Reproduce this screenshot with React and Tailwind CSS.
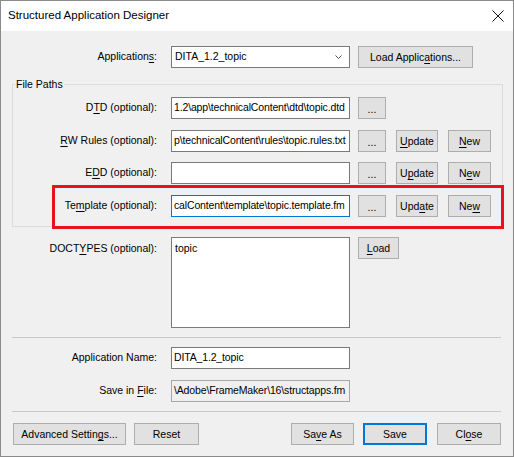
import { useState } from "react";

// underline one mnemonic letter, Windows style
function Mn({ text, at }) {
  if (at == null || at < 0) return <>{text}</>;
  return (
    <>
      {text.slice(0, at)}
      <span className="underline underline-offset-[2px]">{text[at]}</span>
      {text.slice(at + 1)}
    </>
  );
}

function Btn({ children, className = "", primary = false }) {
  return (
    <button
      className={`h-[22px] shrink-0 flex items-center justify-center bg-[#e1e1e1] border text-black text-[10.5px] leading-none ${
        primary ? "border-[#0078d7] shadow-[inset_0_0_0_1px_#0078d7]" : "border-[#adadad]"
      } ${className}`}
    >
      {children}
    </button>
  );
}

function Dots() {
  return <Btn className="w-[28px] text-[#6d6d6d] pt-[3px]">...</Btn>;
}

function Field({ value = "", focused = false, readOnly = false }) {
  return (
    <div
      className={`w-[179px] h-[22px] shrink-0 flex items-center px-[2px] overflow-hidden whitespace-nowrap tracking-[-0.15px] border ${
        focused ? "border-[#0078d7]" : readOnly ? "border-[#a8a8a8]" : "border-[#7a7a7a]"
      } ${readOnly ? "bg-[#f0f0f0]" : "bg-white"}`}
    >
      {value}
    </div>
  );
}

function PathRow({ label, at, value, focused, upd, nw, buttons = true, className = "" }) {
  return (
    <div className={`flex items-center h-[22px] ${className}`}>
      <div className="w-[144px] text-right whitespace-nowrap">
        <Mn text={label} at={at} />
      </div>
      <div className="ml-[14px]">
        <Field value={value} focused={focused} />
      </div>
      <div className="ml-[8px]">
        <Dots />
      </div>
      {buttons && (
        <>
          <Btn className="ml-[10px] w-[42px]">
            <Mn text="Update" at={upd} />
          </Btn>
          <Btn className="ml-[10px] w-[43px]">
            <Mn text="New" at={nw} />
          </Btn>
        </>
      )}
    </div>
  );
}

export default function App() {
  const [app] = useState("DITA_1.2_topic");

  return (
    <div className="relative w-[514px] h-[457px] border border-[#8a8a8a] bg-[#f0f0f0] flex flex-col text-black text-[10.5px] font-['Liberation_Sans',Arial,sans-serif]">
      {/* title bar */}
      <div className="h-[30px] bg-white flex items-center justify-between pl-[7px] pr-[9px]">
        <span className="text-[11.5px]">Structured Application Designer</span>
        <svg width="12" height="12" viewBox="0 0 12 12" className="text-[#111]">
          <path d="M0.5 0.5 L11.5 11.5 M11.5 0.5 L0.5 11.5" stroke="currentColor" strokeWidth="1" fill="none" />
        </svg>
      </div>

      {/* applications */}
      <div className="flex items-center h-[22px] mt-[15px]">
        <div className="w-[156px] text-right">
          <Mn text="Applications:" at={11} />
        </div>
        <div className="ml-[14px] w-[179px] h-[22px] bg-white border border-[#7a7a7a] flex items-center justify-between pl-[3px] pr-[7px]">
          <span>{app}</span>
          <svg width="7" height="4" viewBox="0 0 7 4" className="text-[#555]">
            <path d="M0.5 0.5 L3.5 3.5 L6.5 0.5" stroke="currentColor" strokeWidth="1" fill="none" />
          </svg>
        </div>
        <Btn className="ml-[8px] w-[115px]">
          <Mn text="Load Applications..." at={11} />
        </Btn>
      </div>

      {/* file paths group */}
      <fieldset className="ml-[11px] mt-[10px] w-[491px] border border-[#dcdcdc] pt-[7px] pb-[9px]">
        <legend className="ml-[2px] px-[1px] leading-[12px]">File Paths</legend>
        <PathRow label="DTD (optional):" at={1} value={"1.2\\app\\technicalContent\\dtd\\topic.dtd"} buttons={false} />
        <PathRow
          className="mt-[11px]"
          label="RW Rules (optional):"
          at={0}
          value={"p\\technicalContent\\rules\\topic.rules.txt"}
          upd={0}
          nw={0}
        />
        <PathRow className="mt-[10px]" label="EDD (optional):" at={1} value="" upd={1} nw={1} />
        <PathRow
          className="mt-[11px]"
          label="Template (optional):"
          at={2}
          value={"calContent\\template\\topic.template.fm"}
          focused
          upd={3}
          nw={2}
        />
      </fieldset>

      {/* doctypes */}
      <div className="flex items-start mt-[10px]">
        <div className="w-[156px] text-right pt-[4px]">
          <Mn text="DOCTYPES (optional):" at={4} />
        </div>
        <div className="ml-[14px] w-[179px] h-[91px] bg-white border border-[#7a7a7a] px-[3px] pt-[3px] leading-[14px]">
          topic
        </div>
        <Btn className="ml-[8px] w-[41px]">
          <Mn text="Load" at={0} />
        </Btn>
      </div>

      <div className="ml-[11px] mt-[9px] w-[489px] h-px bg-[#c8c8c8]" />

      {/* application name / save in file */}
      <div className="flex items-center h-[22px] mt-[9px]">
        <div className="w-[156px] text-right">Application Name:</div>
        <div className="ml-[14px]">
          <Field value="DITA_1.2_topic" />
        </div>
      </div>
      <div className="flex items-center h-[22px] mt-[11px]">
        <div className="w-[156px] text-right">
          <Mn text="Save in File:" at={8} />
        </div>
        <div className="ml-[14px]">
          <Field value={"\\Adobe\\FrameMaker\\16\\structapps.fm"} readOnly />
        </div>
      </div>

      <div className="ml-[11px] mt-[9px] w-[489px] h-px bg-[#c8c8c8]" />

      {/* bottom buttons */}
      <div className="flex items-center mt-[11px] pl-[12px]">
        <Btn className="w-[113px]">
          <Mn text="Advanced Settings..." at={15} />
        </Btn>
        <Btn className="ml-[8px] w-[65px]">Reset</Btn>
        <Btn className="ml-[92px] w-[63px]">
          <Mn text="Save As" at={2} />
        </Btn>
        <Btn className="ml-[9px] w-[64px]" primary>
          Save
        </Btn>
        <Btn className="ml-[10px] w-[64px]">
          <Mn text="Close" at={2} />
        </Btn>
      </div>

      {/* red annotation frame */}
      <div className="absolute left-[51px] top-[184px] w-[452px] h-[44px] border-[3px] border-[#e8131c] pointer-events-none" />
    </div>
  );
}
